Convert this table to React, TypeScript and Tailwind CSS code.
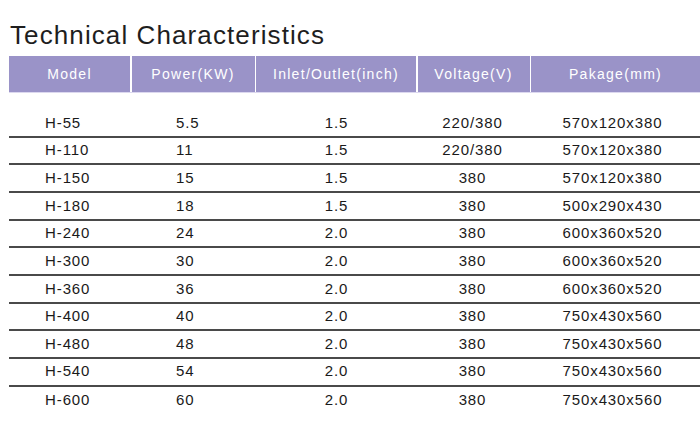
const rows = [
  ["H-55", "5.5", "1.5", "220/380", "570x120x380"],
  ["H-110", "11", "1.5", "220/380", "570x120x380"],
  ["H-150", "15", "1.5", "380", "570x120x380"],
  ["H-180", "18", "1.5", "380", "500x290x430"],
  ["H-240", "24", "2.0", "380", "600x360x520"],
  ["H-300", "30", "2.0", "380", "600x360x520"],
  ["H-360", "36", "2.0", "380", "600x360x520"],
  ["H-400", "40", "2.0", "380", "750x430x560"],
  ["H-480", "48", "2.0", "380", "750x430x560"],
  ["H-540", "54", "2.0", "380", "750x430x560"],
  ["H-600", "60", "2.0", "380", "750x430x560"],
];

const headers = ["Model", "Power(KW)", "Inlet/Outlet(inch)", "Voltage(V)", "Pakage(mm)"];

export default function App() {
  return (
    <div className="w-[700px] h-[424px] bg-white overflow-hidden font-['Liberation_Sans',Arial,sans-serif]">
      <h1 className="pl-[10px] pt-[20px] text-[26px] leading-[30px] text-[#1e1e1e] tracking-[1.1px]">
        Technical Characteristics
      </h1>

      <div className="ml-[9px] mt-[6px]">
        {/* Header */}
        <div className="grid grid-cols-[121px_123px_160px_112px_1fr] gap-x-[1.5px] border-b border-[#dcd8ef]">
          {headers.map((h) => (
            <div
              key={h}
              className="h-[36px] bg-[#9a93c8] text-white text-[14px] tracking-[1.3px] flex items-center justify-center"
            >
              {h}
            </div>
          ))}
        </div>

        {/* Body */}
        <div className="mt-[17px]">
          {rows.map((r, i) => (
            <div
              key={r[0]}
              className={`grid grid-cols-[122px_124px_161px_113px_1fr] h-[27.67px] items-center text-[15px] tracking-[0.9px] text-[#1a1a1a] ${
                i < rows.length - 1 ? "border-b-2 border-[#4a4a4a]" : ""
              }`}
            >
              <div className="pl-[36px]">{r[0]}</div>
              <div className="pl-[45px]">{r[1]}</div>
              <div className="text-center pl-[2px]">{r[2]}</div>
              <div className="text-center">{r[3]}</div>
              <div className="text-center pr-[4px]">{r[4]}</div>
            </div>
          ))}
        </div>
      </div>
    </div>
  );
}
